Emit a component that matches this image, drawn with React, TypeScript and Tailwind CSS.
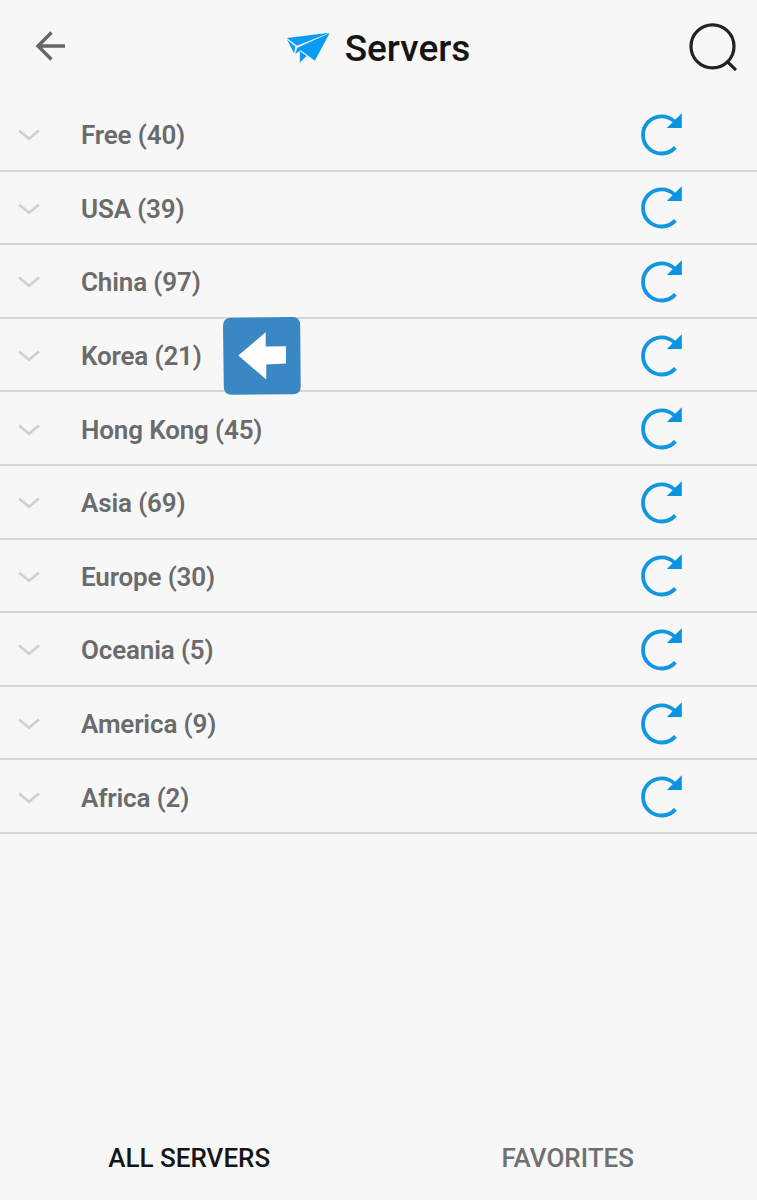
const servers = [
  { name: "Free", count: 40 },
  { name: "USA", count: 39 },
  { name: "China", count: 97 },
  { name: "Korea", count: 21, marked: true },
  { name: "Hong Kong", count: 45 },
  { name: "Asia", count: 69 },
  { name: "Europe", count: 30 },
  { name: "Oceania", count: 5 },
  { name: "America", count: 9 },
  { name: "Africa", count: 2 },
]

function BackIcon() {
  return (
    <svg width="32" height="32" viewBox="0 0 32 32" fill="none" stroke="#666666" strokeWidth="3.4">
      <path d="M31 16H3.5M17.5 2.5L4 16l13.5 13.5" />
    </svg>
  )
}

function PlaneIcon() {
  return (
    <svg width="44" height="32" viewBox="0 0 44 32" fill="#0a9bf5">
      <path d="M0.8 6L43.4 0.8L12.4 13.2L10.6 13.5Z" />
      <path d="M1 7.4L9.4 14.6L8.2 21.4Z" />
      <path d="M43.7 0.9L28.9 28.8L14.6 18.2L9.2 22L11.2 15.9L14 14.6Z" />
      <path d="M13.8 19L20.6 24L13.8 30.8Z" />
    </svg>
  )
}

function SearchIcon() {
  return (
    <svg width="50" height="50" viewBox="0 0 50 50" fill="none" stroke="#222222" strokeWidth="3.2">
      <circle cx="24.5" cy="25.4" r="21.5" />
      <path d="M39.6 40.8l7.4 7.4" strokeLinecap="round" />
    </svg>
  )
}

function ChevronIcon() {
  return (
    <svg
      className="mt-[3px]"
      width="22"
      height="12"
      viewBox="0 0 22 12"
      fill="none"
      stroke="#d0d0d0"
      strokeWidth="2.6"
    >
      <path d="M1 1.4l10 8.4l10-8.4" />
    </svg>
  )
}

function RefreshIcon() {
  return (
    <svg width="44" height="44" viewBox="0 0 44 44">
      <path
        d="M35.4 35.4A18.6 18.6 0 1 1 34.5 9.5"
        fill="none"
        stroke="#1296e0"
        strokeWidth="3.8"
      />
      <path d="M41.8 1.2v14.8H26.8z" fill="#0a93e2" />
    </svg>
  )
}

function MarkerBadge() {
  return (
    <div className="absolute left-[223px] -top-[2px] z-10">
      <svg width="78" height="78" viewBox="0 0 78 78">
        <path
          d="M8 0.8L69.5 0Q77 0 77.2 8L77.7 69.5Q77.7 77 70 77.2L9 77.8Q1 77.8 0.8 70L0 9Q0 1 8 0.8Z"
          fill="#3a88c3"
        />
        <path
          d="M15.3 38.6L42.7 15.3V29.6L63 29.2V46.6L43.3 47.6V62.6Z"
          fill="#ffffff"
        />
      </svg>
    </div>
  )
}

export default function App() {
  return (
    <div className="flex h-[1200px] w-[757px] flex-col overflow-hidden bg-[#f7f7f7] font-['Roboto',sans-serif]">
      <header className="flex h-[98px] shrink-0 items-start justify-between pl-[34px] pr-[19px]">
        <button className="mt-[30px]" aria-label="Back">
          <BackIcon />
        </button>
        <div className="ml-[2px] mt-[25px] flex items-start gap-[15px]">
          <div className="mt-[7px]">
            <PlaneIcon />
          </div>
          <h1 className="mt-px text-[37px] font-medium leading-[46px] text-[#151515]">Servers</h1>
        </div>
        <button className="mt-[21px]" aria-label="Search">
          <SearchIcon />
        </button>
      </header>

      <ul>
        {servers.map((server) => (
          <li
            key={server.name}
            className="relative flex h-[73.6px] items-center border-b-2 border-[#d5d5d5] pl-[18px] pr-[73px]"
          >
            <ChevronIcon />
            <span className="ml-[41px] mt-[3px] grow text-[26px] font-semibold leading-8 tracking-[-0.15px] text-[#6b6b6b]">
              {server.name} ({server.count})
            </span>
            <RefreshIcon />
            {server.marked && <MarkerBadge />}
          </li>
        ))}
      </ul>

      <nav className="mt-auto grid h-[84px] grid-cols-2 text-[26px] font-medium">
        <button className="text-[#151515]">ALL SERVERS</button>
        <button className="text-[#707070]">FAVORITES</button>
      </nav>
    </div>
  )
}
